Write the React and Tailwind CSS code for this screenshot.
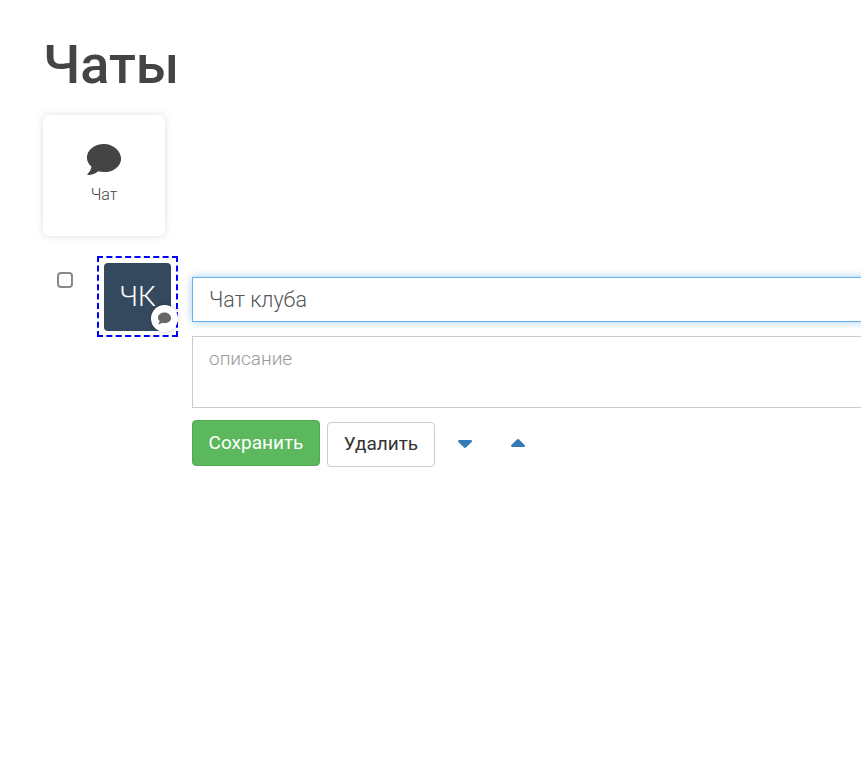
export default function App() {
  const bubble =
    "M16 3C8.3 3 2 7.900 2 14c0 2.900 1.400 5.500 3.700 7.400-.3 2.200-1.300 4.400-3.200 6.100-.4.4-.1.9.4.9 3.400-.1 6.300-1.300 8.400-3.100 1.500.4 3.100.7 4.700.7 7.700 0 14-4.900 14-11S23.700 3 16 3z";

  return (
    <div className="h-[783px] w-[861px] overflow-hidden bg-white font-['Roboto',sans-serif] text-[#444]">
      {/* Title */}
      <h1 className="pl-[43px] pt-[35px] text-[54px] font-medium leading-[60px] text-[#444]">Чаты</h1>

      {/* Add tile */}
      <div className="ml-[43px] mt-[20px] flex h-[121px] w-[122px] flex-col items-center rounded-md bg-white pt-[29px] shadow-[0_0_8px_rgba(0,0,0,0.13)]">
        <svg viewBox="2 3 28 25.400" className="h-[31px] w-[36px] fill-[#444]">
          <path d={bubble} />
        </svg>
        <span className="mt-[10px] text-[16px] font-light leading-[20px]">Чат</span>
      </div>

      {/* Chat row */}
      <div className="mt-[20px] flex items-start">
        <input
          type="checkbox"
          className="ml-[57px] mt-[16px] h-[16px] w-[16px] shrink-0 appearance-none rounded-[4px] border-2 border-[#8a8a8a] bg-white"
        />
        <div className="relative ml-[24px] h-[81px] w-[81px] shrink-0 border-2 border-dashed border-[#0000ff] p-[5px]">
          <div className="flex h-[68px] w-[67px] items-center justify-center rounded bg-[#34495e] text-[28px] font-light text-white">
            ЧК
          </div>
          <div className="absolute bottom-[3px] right-[-2px] flex h-[27px] w-[27px] items-center justify-center rounded-full bg-white shadow-[0_0_5px_rgba(0,0,0,0.2)]">
            <svg viewBox="0 0 32 32" className="h-[15px] w-[15px] fill-[#666]">
              <path d={bubble} />
            </svg>
          </div>
        </div>

        <div className="ml-[14px] mt-[21px] w-[720px] shrink-0">
          <input
            type="text"
            defaultValue="Чат клуба"
            className="block h-[45px] w-full border border-[#66afe9] px-4 text-[21.5px] font-light text-[#555] shadow-[0_0_8px_rgba(102,175,233,0.6)] outline-none"
          />
          <textarea
            placeholder="описание"
            className="mt-[14px] block h-[72px] w-full resize-none border border-[#ccc] px-4 py-[9px] text-[19px] font-light leading-[25px] text-[#555] outline-none placeholder:text-[#999]"
          />
          <div className="mt-3 flex items-start">
            <button className="h-[46px] w-[128px] rounded border border-[#4cae4c] bg-[#5cb85c] text-[19px] text-white">
              Сохранить
            </button>
            <button className="ml-[7px] mt-[2px] h-[45px] w-[108px] rounded border border-[#ccc] bg-white text-[19px] text-[#333]">
              Удалить
            </button>
            {/* Move down / up */}
            <svg viewBox="0 0 14 8" className="ml-[23px] mt-[20px] h-[8px] w-[14px] fill-[#337ab7]">
              <path d="M0 1.200Q0 0 1.200 0h11.600Q14 0 14 1.200q0 .5-.4.9L8 7.500q-1 .9-2 0L.4 2.100Q0 1.700 0 1.200z" />
            </svg>
            <svg viewBox="0 0 14 8" className="ml-[39px] mt-[19px] h-[8px] w-[14px] fill-[#337ab7]">
              <path d="M0 6.800Q0 8 1.200 8h11.600Q14 8 14 6.800q0-.5-.4-.9L8 .5q-1-.9-2 0L.4 5.900Q0 6.300 0 6.800z" />
            </svg>
          </div>
        </div>
      </div>
    </div>
  );
}
